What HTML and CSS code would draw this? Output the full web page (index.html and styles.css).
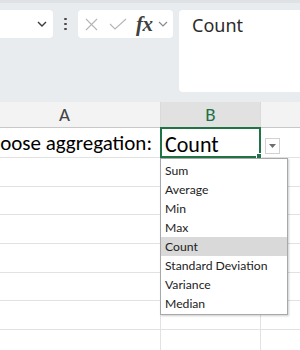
FILE: index.html
```html
<!DOCTYPE html>
<html lang="en">
<head>
  <meta charset="UTF-8">
  <title>Aggregation dropdown</title>
  <link rel="stylesheet" href="styles.css">
</head>
<body>
  <div class="toolbar">
    <div class="namebox">
      <svg class="chev" width="10" height="6" viewBox="0 0 10 6"><path d="M1 1l4 4 4-4" fill="none" stroke="#3a3a3a" stroke-width="1.4"/></svg>
    </div>
    <div class="dots"><span></span><span></span><span></span></div>
    <div class="fxbox">
      <svg width="13" height="13" viewBox="0 0 13 13"><path d="M1 1l11 11M12 1L1 12" stroke="#b5b5b5" stroke-width="1.1" fill="none"/></svg>
      <svg width="18" height="12" viewBox="0 0 18 12"><path d="M1 6l5 5L17 1" stroke="#b5b5b5" stroke-width="1.1" fill="none"/></svg>
      <span class="fx">fx</span>
      <svg width="10" height="6" viewBox="0 0 10 6"><path d="M1 1l4 4 4-4" fill="none" stroke="#8a8a8a" stroke-width="1.2"/></svg>
    </div>
    <div class="formula">Count</div>
  </div>

  <div class="sheet">
    <div class="head">A</div>
    <div class="head sel">B</div>
    <div class="head"></div>

    <div class="cell label">Choose aggregation:</div>
    <div class="cell value">Count
      <div class="selection"><span class="handle"></span></div>
      <div class="drop-btn"><svg width="7" height="4" viewBox="0 0 7 4"><path d="M0 0h7L3.5 4z" fill="#6e6e6e"/></svg></div>
      <ul class="list">
        <li>Sum</li>
        <li>Average</li>
        <li>Min</li>
        <li>Max</li>
        <li class="active">Count</li>
        <li>Standard Deviation</li>
        <li>Variance</li>
        <li>Median</li>
      </ul>
    </div>
    <div class="cell"></div>

    <div class="cell row"></div><div class="cell row"></div><div class="cell row"></div>
    <div class="cell row"></div><div class="cell row"></div><div class="cell row"></div>
    <div class="cell row"></div><div class="cell row"></div><div class="cell row"></div>
    <div class="cell row"></div><div class="cell row"></div><div class="cell row"></div>
    <div class="cell row"></div><div class="cell row"></div><div class="cell row"></div>
    <div class="cell row"></div><div class="cell row"></div><div class="cell row"></div>
    <div class="cell row"></div><div class="cell row"></div><div class="cell row"></div>
  </div>
</body>
</html>
```

FILE: styles.css
```css
body {
  margin: 0;
  width: 300px;
  height: 350px;
  overflow: hidden;
  background: #fff;
  font-family: "Noto Sans", "Open Sans", sans-serif;
}
.toolbar {
  height: 102px;
  box-sizing: border-box;
  padding-top: 10px;
  background: #e9ecef;
  border-top: 3px solid #dfe2e5;
  display: flex;
  align-items: flex-start;
}
.namebox {
  margin-top: -3px;
  margin-left: -8px;
  width: 61px;
  height: 28px;
  background: #fff;
  border-radius: 4px;
  display: flex;
  align-items: center;
  justify-content: flex-end;
  padding-right: 6px;
  box-sizing: border-box;
}
.dots {
  margin-top: -3px;
  width: 25px;
  height: 28px;
  display: flex;
  flex-direction: column;
  align-items: center;
  justify-content: center;
  gap: 2.5px;
}
.dots span {
  width: 2.5px;
  height: 2.5px;
  background: #4a4a4a;
  border-radius: 50%;
}
.fxbox {
  margin-top: -3px;
  width: 95px;
  height: 28px;
  background: #fff;
  border-radius: 4px;
  display: flex;
  align-items: center;
  padding-left: 7px;
  box-sizing: border-box;
}
.fxbox svg:nth-child(2) {
  margin-left: 11px;
}
.fx {
  margin-left: 9px;
  font-family: "Liberation Serif", serif;
  font-style: italic;
  font-weight: bold;
  font-size: 21px;
  line-height: 20px;
  color: #404040;
  letter-spacing: -0.5px;
}
.fxbox svg:last-child {
  margin-left: 5px;
}
.formula {
  margin-top: -3px;
  margin-left: 6px;
  flex: 1;
  height: 82px;
  background: #fff;
  border-radius: 4px 0 0 4px;
  padding: 4px 0 0 13px;
  box-sizing: border-box;
  font-size: 18px;
  line-height: 22px;
  color: #2b2b2b;
}
.sheet {
  margin-left: -31px;
  display: grid;
  grid-template-columns: 192px 100px 100px;
  font-family: "Carlito", "Lato", sans-serif;
}
.head {
  height: 26px;
  box-sizing: border-box;
  background: #f3f3f3;
  border-right: 1px solid #dadada;
  border-bottom: 1px solid #c8c8c8;
  text-align: center;
  font-size: 19px;
  line-height: 26px;
  color: #444;
}
.head.sel {
  background: #e1e1e1;
  color: #1e7145;
  border-bottom: 1px solid #b5b5b5;
}
.cell {
  height: 30px;
  box-sizing: border-box;
  border-right: 1px solid #e2e2e2;
  border-bottom: 1px solid #e2e2e2;
  font-size: 21px;
  line-height: 29px;
  color: #000;
}
.cell.row {
  height: 28.7px;
}
.label {
  text-align: right;
  padding-right: 8px;
  padding-top: 1px;
  white-space: nowrap;
}
.value {
  position: relative;
  padding-left: 4px;
  padding-top: 2px;
  font-size: 22px;
}
.selection {
  position: absolute;
  top: -1px;
  left: -1px;
  width: 101px;
  height: 31px;
  box-sizing: border-box;
  border: 2px solid #217346;
}
.handle {
  position: absolute;
  right: -3px;
  bottom: -3px;
  width: 4px;
  height: 4px;
  background: #217346;
  border: 1px solid #fff;
}
.drop-btn {
  position: absolute;
  top: 10px;
  left: 104px;
  width: 15px;
  height: 16px;
  box-sizing: border-box;
  background: #fff;
  border: 1px solid #d2d2d2;
  display: flex;
  align-items: center;
  justify-content: center;
  z-index: 2;
}
.list {
  position: absolute;
  top: 30px;
  left: -1px;
  width: 126px;
  margin: 0;
  padding: 2px 0 1px;
  list-style: none;
  background: #fff;
  border: 1px solid #a8a8a8;
  box-shadow: 1px 1px 2px rgba(0, 0, 0, 0.2);
  font-family: "Lato", "Noto Sans", sans-serif;
  z-index: 3;
}
.list li {
  height: 19px;
  line-height: 19px;
  padding-left: 4px;
  font-size: 12.2px;
  color: #222;
}
.list li.active {
  background: #d9d9d9;
}
```
